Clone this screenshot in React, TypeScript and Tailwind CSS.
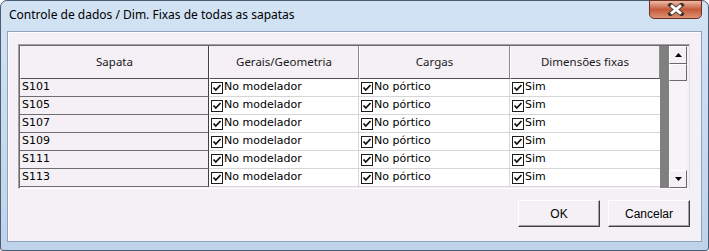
import React from "react";

const rows = ["S101", "S105", "S107", "S109", "S111", "S113"];

function Check() {
  return (
    <svg width="12" height="12" viewBox="0 0 12 12" className="shrink-0">
      <rect x="0.5" y="0.5" width="11" height="11" fill="#fff" stroke="#1c1c1c" />
      <path d="M2.5 5.5 L4.8 8 L9.5 3" fill="none" stroke="#111" strokeWidth="1.8" />
    </svg>
  );
}

function CheckCell({ label, last }: { label: string; last?: boolean }) {
  return (
    <div
      className={
        "h-[18px] bg-white border-b border-[#d6d6d6] flex items-center gap-[1px] pl-[2px] " +
        (last ? "" : "border-r border-r-[#d6d6d6]")
      }
    >
      <Check />
      <span>{label}</span>
    </div>
  );
}

function HeaderCell({ label, dark }: { label: string; dark?: boolean }) {
  return (
    <div
      className={
        "h-[33px] flex items-center justify-center bg-[#f4f0f5] border-b border-[#505050] border-l border-l-white text-[11.5px] text-[#1a1a1a] font-['Noto_Sans',sans-serif] " +
        (dark ? "border-r border-r-[#404040]" : "border-r border-r-[#8a8a8a]")
      }
    >
      {label}
    </div>
  );
}

function ScrollButton({ up }: { up?: boolean }) {
  return (
    <div className="h-[18px] w-[18px] bg-[#f4f0f5] border border-t-white border-l-white border-r-[#696969] border-b-[#696969] flex items-center justify-center">
      <svg width="7" height="4" viewBox="0 0 7 4">
        <path d={up ? "M0 4 L3.5 0 L7 4 Z" : "M0 0 L7 0 L3.5 4 Z"} fill="#000" />
      </svg>
    </div>
  );
}

function Button({ label }: { label: string }) {
  return (
    <button className="w-[82px] h-[27px] bg-[#f4f0f5] border border-t-white border-l-white border-r-[#404040] border-b-[#404040] shadow-[inset_-1px_-1px_0_#a0a0a0] text-[12px] text-black font-['Liberation_Sans',sans-serif]">
      {label}
    </button>
  );
}

export default function App() {
  return (
    <div className="w-[709px] h-[251px] bg-white overflow-hidden">
      <div className="w-full h-full rounded-t-[7px] rounded-b-[3px] border border-[#4b5d75] bg-gradient-to-b from-[#d2e3f4] via-[#c8dbef] to-[#bed3ea] flex flex-col">
        {/* title bar */}
        <div className="h-[30px] shrink-0 flex items-start justify-between pl-[8px] pr-[6px]">
          <div className="pt-[5px] text-[12px] text-black font-['Noto_Sans',sans-serif]">
            Controle de dados / Dim. Fixas de todas as sapatas
          </div>
          <div className="w-[53px] h-[19px] -mt-[1px] rounded-b-[5px] border border-[#6d2f20] bg-gradient-to-b from-[#ebbba8] via-[#c45a3a] to-[#dc9274] flex items-center justify-center">
            <svg width="18" height="13" viewBox="0 0 18 13">
              <path d="M3.5 2 L14.5 11 M14.5 2 L3.5 11" stroke="#4a3430" strokeWidth="4.6" strokeLinecap="square" />
              <path d="M4 2.4 L14 10.6 M14 2.4 L4 10.6" stroke="#fff" strokeWidth="2.8" />
            </svg>
          </div>
        </div>

        {/* client area */}
        <div className="flex-1 mx-[6px] mb-[8px] border border-[#8ea4be] bg-[#f4f0f5] shadow-[inset_1px_1px_0_#fff] flex flex-col pl-[10px] pr-[11px] pt-[12px] pb-[14px]">
          {/* grid */}
          <div className="h-[145px] border-t border-l border-[#a0a0a0] border-r border-r-[#e0e0e0] border-b border-b-white flex">
            <div className="flex-1 border-t border-l border-[#696969] flex overflow-hidden text-[11px] text-black font-['DejaVu_Sans',sans-serif]">
              <div className="w-[640px] shrink-0 grid grid-cols-[189px_150px_151px_150px] content-start">
                <HeaderCell label="Sapata" dark />
                <HeaderCell label="Gerais/Geometria" />
                <HeaderCell label="Cargas" />
                <HeaderCell label="Dimensões fixas" />
                {rows.map((r) => (
                  <React.Fragment key={r}>
                    <div className="h-[18px] bg-[#f4f0f5] border-r border-[#404040] border-b border-b-[#6e6e6e] flex items-center pl-[2px]">
                      {r}
                    </div>
                    <CheckCell label="No modelador" />
                    <CheckCell label="No pórtico" />
                    <CheckCell label="Sim" last />
                  </React.Fragment>
                ))}
              </div>
              <div className="w-[9px] shrink-0 bg-[#808080]" />
              <div className="w-[18px] shrink-0 bg-[#f7f4f8] flex flex-col justify-between">
                <div className="flex flex-col">
                  <ScrollButton up />
                  <div className="h-[17px] w-[18px] bg-[#f4f0f5] border border-t-white border-l-white border-r-[#696969] border-b-[#696969]" />
                </div>
                <ScrollButton />
              </div>
            </div>
          </div>

          {/* buttons */}
          <div className="mt-[11px] flex justify-end gap-[8px]">
            <Button label="OK" />
            <Button label="Cancelar" />
          </div>
        </div>
      </div>
    </div>
  );
}
